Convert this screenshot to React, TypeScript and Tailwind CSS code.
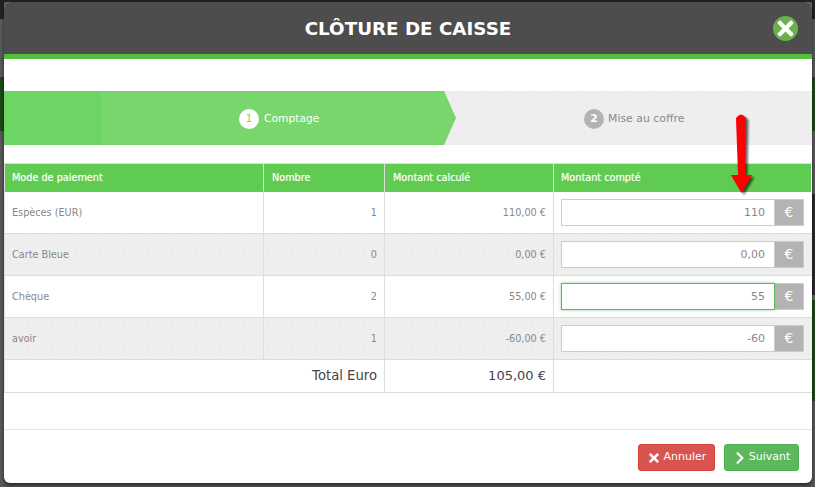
import { FaTimes, FaChevronRight } from "react-icons/fa"

const rows = [
    { mode: "Espèces (EUR)", count: "1", amount: "110,00 €", value: "110", focus: false },
    { mode: "Carte Bleue", count: "0", amount: "0,00 €", value: "0,00", focus: false },
    { mode: "Chèque", count: "2", amount: "55,00 €", value: "55", focus: true },
    { mode: "avoir", count: "1", amount: "-60,00 €", value: "-60", focus: false },
]

const dotted = "bg-[#eeeeee] bg-[radial-gradient(#f3f3f3_0.6px,transparent_0.8px)] bg-[length:6px_6px]"

function Rail({ blocks }: { blocks: [string, string][] }) {
    return (
        <div className="flex flex-col">
            {blocks.map(([h, c], i) => (
                <div key={i} className={`${h} ${c}`} />
            ))}
        </div>
    )
}

export default function App() {
    return (
        <div className="w-[815px] h-[487px] overflow-hidden bg-[#555555] flex flex-col font-['DejaVu_Sans',sans-serif] relative">
            <div className="h-[2px] bg-[#222222]" />
            <div className="flex h-[485px]">
                <div className="w-[4px]">
                    <Rail blocks={[
                        ["h-[17px]", "bg-[#222222]"],
                        ["h-[58px]", "bg-[#5c5c5c]"],
                        ["h-[54px]", "bg-[#1c4a16]"],
                        ["h-[354px]", "bg-[#5a5a5a]"],
                    ]} />
                </div>

                <div className="w-[808px] h-[481px] bg-white rounded-[6px] overflow-hidden flex flex-col shadow-[0_2px_4px_rgba(0,0,0,0.6)] relative">
                    <header className="h-[57px] shrink-0 bg-[#4d4d4d] border-b-[5px] border-[#55bf3b] flex items-center justify-center relative">
                        <h1 className="text-white font-bold text-[18.3px] leading-none pt-[2px]">CLÔTURE DE CAISSE</h1>
                        <button className="absolute right-[14px] top-[14px] size-[25px] rounded-full bg-[#6ab04c] flex items-center justify-center text-white">
                            <FaTimes className="size-[23px]" />
                        </button>
                    </header>

                    <div className={`mt-[32px] h-[54px] shrink-0 flex ${dotted}`}>
                        <div className="w-[97px] bg-[#6cd564]" />
                        <div className="w-[355px] bg-[#78d66c] [clip-path:polygon(0_0,343px_0,100%_50%,343px_100%,0_100%)] flex items-center pl-[138px] pt-[2px] gap-[5px] text-white text-[10.7px]">
                            <span className="size-[20px] rounded-full bg-white text-[#78d66c] flex items-center justify-center">1</span>
                            <span className="pt-[1px]">Comptage</span>
                        </div>
                        <div className="flex items-center pl-[128px] pt-[2px] gap-[4px] text-[#8a8a8a] text-[10.9px]">
                            <span className="size-[20px] rounded-full bg-[#b3b3b3] text-white font-bold flex items-center justify-center">2</span>
                            <span className="pt-[1px]">Mise au coffre</span>
                        </div>
                    </div>

                    <table className="mt-[18px] w-[808px] table-fixed border-separate border-spacing-0 text-[9.7px] text-[#888888] shrink-0">
                        <colgroup>
                            <col className="w-[260px]" />
                            <col className="w-[121px]" />
                            <col className="w-[169px]" />
                            <col />
                        </colgroup>
                        <thead>
                            <tr className="h-[29px] bg-[#5fcb50] text-white text-left text-[9.7px]">
                                <th className="pl-[7px] pt-[1px] font-normal border-y border-t-[#dddddd] border-b-[#5fcb50] border-l border-l-[#dddddd] border-r border-r-[#dddddd] [text-shadow:0_0_1px_rgba(255,255,255,0.6)]">Mode de paiement</th>
                                <th className="pl-[8px] pt-[1px] font-normal border-t border-t-[#dddddd] border-r border-r-[#dddddd] [text-shadow:0_0_1px_rgba(255,255,255,0.6)]">Nombre</th>
                                <th className="pl-[8px] pt-[1px] font-normal border-t border-t-[#dddddd] border-r border-r-[#dddddd] [text-shadow:0_0_1px_rgba(255,255,255,0.6)]">Montant calculé</th>
                                <th className="pl-[7px] pt-[1px] font-normal border-t border-t-[#dddddd] border-r border-r-white [text-shadow:0_0_1px_rgba(255,255,255,0.6)]">Montant compté</th>
                            </tr>
                        </thead>
                        <tbody>
                            {rows.map((row, i) => (
                                <tr key={row.mode} className={`h-[42px] ${i % 2 === 1 ? dotted : "bg-white"}`}>
                                    <td className="pl-[7px] pt-[2px] border-b border-l border-r border-[#dddddd]">{row.mode}</td>
                                    <td className="pr-[7px] pt-[2px] text-right border-b border-r border-[#dddddd]">{row.count}</td>
                                    <td className="pr-[7px] pt-[2px] text-right border-b border-r border-[#dddddd]">{row.amount}</td>
                                    <td className="pl-[7px] border-b border-[#dddddd]">
                                        <div className="flex w-[243px] h-[27px]">
                                            <input
                                                readOnly
                                                value={row.value}
                                                className={`w-[214px] h-full bg-white text-right pr-[9px] text-[11px] text-[#888888] outline-none border ${row.focus ? "border-[#5cb85c] shadow-[0_0_3px_rgba(92,184,92,0.6)]" : "border-[#cccccc]"}`}
                                            />
                                            <span className="w-[29px] bg-[#b3b3b3] border border-[#cccccc] border-l-0 text-white text-[14px] flex items-center justify-center">€</span>
                                        </div>
                                    </td>
                                </tr>
                            ))}
                            <tr className="h-[33px] text-[13.2px] text-[#444444]">
                                <td colSpan={2} className="pr-[7px] text-right border-b border-l border-r border-[#dddddd]">Total Euro</td>
                                <td className="pr-[7px] text-[13px] text-right border-b border-r border-[#dddddd]">105,00 €</td>
                                <td className="border-b border-[#dddddd]" />
                            </tr>
                        </tbody>
                    </table>

                    <footer className="mt-[36px] h-[53px] border-t border-[#e5e5e5] flex justify-end items-start pt-[14px] pr-[13px] gap-[9px] text-[11px] text-white">
                        <button className="w-[77px] h-[27px] rounded-[3px] bg-[#d9534f] border border-[#d43f3a] flex items-center justify-center gap-[3px]">
                            <FaTimes className="size-[14px]" />
                            Annuler
                        </button>
                        <button className="w-[75px] h-[27px] rounded-[3px] bg-[#5cb85c] border border-[#4cae4c] flex items-center justify-center gap-[2px]">
                            <FaChevronRight className="size-[14px]" />
                            Suivant
                        </button>
                    </footer>
                </div>

                <div className="w-[3px]">
                    <Rail blocks={[
                        ["h-[17px]", "bg-[#222222]"],
                        ["h-[58px]", "bg-[#5c5c5c]"],
                        ["h-[54px]", "bg-[#1c4a16]"],
                        ["h-[63px]", "bg-[#5c5c5c]"],
                        ["h-[101px]", "bg-[#2c2c2c]"],
                        ["h-[5px]", "bg-[#666666]"],
                        ["h-[101px]", "bg-[#1c4a16]"],
                        ["h-[86px]", "bg-[#5a5a5a]"],
                    ]} />
                </div>
            </div>

            {/* red arrow drawn on top of the screenshot */}
            <svg className="absolute left-[725px] top-[110px]" width="36" height="90" viewBox="0 0 36 90">
                <path d="M11 8 Q16 1 21 8 L20 65 L27 65 L16.5 83 L6 65 L13 65 Z" fill="#000" opacity="0.6" transform="translate(2.5 2)" style={{ filter: "blur(1px)" }} />
                <path d="M11 8 Q16 1 21 8 L20 65 L27 65 L16.5 83 L6 65 L13 65 Z" fill="#ff0000" />
            </svg>
        </div>
    )
}
